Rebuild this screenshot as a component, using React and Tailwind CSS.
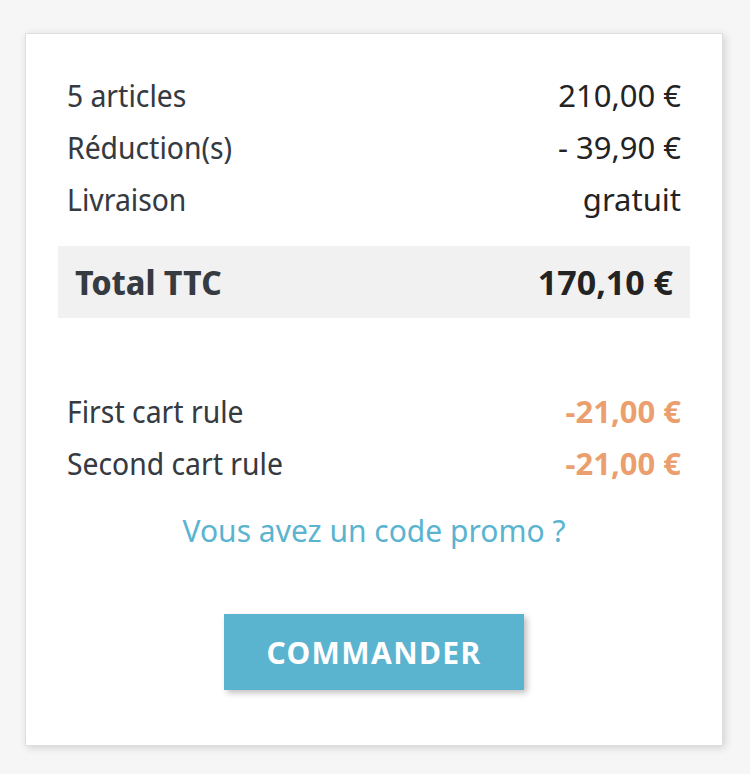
import React from "react";

const rows = [
  { label: "5 articles", value: "210,00 €" },
  { label: "Réduction(s)", value: "- 39,90 €" },
  { label: "Livraison", value: "gratuit" },
];

const rules = [
  { label: "First cart rule", value: "-21,00 €" },
  { label: "Second cart rule", value: "-21,00 €" },
];

const display = { fontFamily: '"Noto Sans Display", "Noto Sans", sans-serif' };

export default function App() {
  return (
    <div
      className="min-h-[774px] w-full bg-[#f6f6f6] pt-[33px] pl-[25px]"
      style={{ fontFamily: '"Noto Sans", "Open Sans", sans-serif' }}
    >
      <div className="w-[698px] h-[713px] bg-white border border-[#dedede] shadow-[2px_2px_8px_rgba(0,0,0,0.15)] px-[32px] pt-[35px]">
        {/* lignes du récapitulatif */}
        {rows.map((r) => (
          <div key={r.label} className="flex justify-between items-center h-[52px] px-[9px]">
            <span className="text-[#363a41] text-[30px]" style={display}>{r.label}</span>
            <span className="text-[#232323] text-[31px]">{r.value}</span>
          </div>
        ))}

        <div className="mt-[21px] h-[72px] bg-[#f1f1f1] flex justify-between items-center px-[17px] font-bold">
          <span className="text-[#363a41] text-[34px]" style={display}>Total TTC</span>
          <span className="text-[#232323] text-[34px]">170,10 €</span>
        </div>

        <div className="mt-[67px]">
          {rules.map((r) => (
            <div key={r.label} className="flex justify-between items-center h-[52px] px-[9px]">
              <span className="text-[#363a41] text-[30px]" style={display}>{r.label}</span>
              <span className="text-[#eb9f6f] font-bold text-[31px]">{r.value}</span>
            </div>
          ))}
        </div>

        <div className="mt-[16px] text-center text-[30px] text-[#5ab4cf] leading-[52px]">
          <a href="#">Vous avez un code promo ?</a>
        </div>

        <div className="flex justify-center mt-[57px]">
          <button className="w-[300px] h-[76px] bg-[#5ab3cf] text-white uppercase font-bold text-[30px] tracking-[1.4px] shadow-[3px_3px_6px_rgba(0,0,0,0.25)]">
            Commander
          </button>
        </div>
      </div>
    </div>
  );
}
